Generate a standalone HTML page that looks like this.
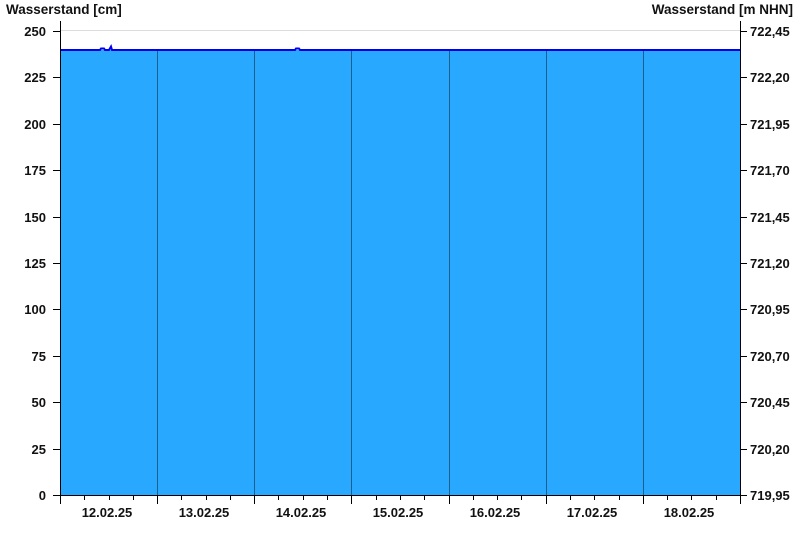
<!DOCTYPE html>
<html><head><meta charset="utf-8"><style>
html,body{margin:0;padding:0;background:#fff;width:800px;height:550px;overflow:hidden}
svg text{font-family:"Liberation Sans",Arial,sans-serif;font-weight:bold;font-size:13px;fill:#111}
svg text.t{font-size:13.5px}
</style></head><body>
<svg width="800" height="550" viewBox="0 0 800 550" xmlns="http://www.w3.org/2000/svg">
<text class="t" x="6" y="14">Wasserstand [cm]</text>
<text class="t" x="793" y="14" text-anchor="end">Wasserstand [m NHN]</text>
<line x1="60" y1="30.5" x2="740" y2="30.5" stroke="#dcdcdc" stroke-width="1"/>
<rect x="60" y="50" width="680" height="445" fill="#29a8ff"/>
<g stroke="#1d5f8c" stroke-width="1">
<line x1="157.5" y1="50" x2="157.5" y2="495"/>
<line x1="254.5" y1="50" x2="254.5" y2="495"/>
<line x1="351.5" y1="50" x2="351.5" y2="495"/>
<line x1="449.5" y1="50" x2="449.5" y2="495"/>
<line x1="546.5" y1="50" x2="546.5" y2="495"/>
<line x1="643.5" y1="50" x2="643.5" y2="495"/>
</g>
<polyline points="60,50 100,50 101,48.5 104,48.5 105,50 109,50 111,46.5 112,50 295,50 296,48.5 299,48.5 300,50 740,50" fill="none" stroke="#0000ee" stroke-width="2"/>
<g stroke="#000" stroke-width="1">
<line x1="60.5" y1="21" x2="60.5" y2="495"/>
<line x1="740.5" y1="21" x2="740.5" y2="495"/>
<line x1="53" y1="495.5" x2="747" y2="495.5"/>
</g>
<g stroke="#000" stroke-width="1">
<line x1="53" y1="31.5" x2="60" y2="31.5"/><line x1="53" y1="77.5" x2="60" y2="77.5"/>
<line x1="53" y1="124.5" x2="60" y2="124.5"/><line x1="53" y1="170.5" x2="60" y2="170.5"/>
<line x1="53" y1="217.5" x2="60" y2="217.5"/><line x1="53" y1="263.5" x2="60" y2="263.5"/>
<line x1="53" y1="309.5" x2="60" y2="309.5"/><line x1="53" y1="356.5" x2="60" y2="356.5"/>
<line x1="53" y1="402.5" x2="60" y2="402.5"/><line x1="53" y1="449.5" x2="60" y2="449.5"/>
<line x1="741" y1="31.5" x2="747" y2="31.5"/><line x1="741" y1="77.5" x2="747" y2="77.5"/>
<line x1="741" y1="124.5" x2="747" y2="124.5"/><line x1="741" y1="170.5" x2="747" y2="170.5"/>
<line x1="741" y1="217.5" x2="747" y2="217.5"/><line x1="741" y1="263.5" x2="747" y2="263.5"/>
<line x1="741" y1="309.5" x2="747" y2="309.5"/><line x1="741" y1="356.5" x2="747" y2="356.5"/>
<line x1="741" y1="402.5" x2="747" y2="402.5"/><line x1="741" y1="449.5" x2="747" y2="449.5"/>
</g>
<g stroke="#000" stroke-width="1">
<line x1="60.5" y1="495" x2="60.5" y2="504"/><line x1="84.5" y1="495" x2="84.5" y2="500"/><line x1="109.5" y1="495" x2="109.5" y2="500"/><line x1="133.5" y1="495" x2="133.5" y2="500"/>
<line x1="157.5" y1="495" x2="157.5" y2="504"/><line x1="181.5" y1="495" x2="181.5" y2="500"/><line x1="206.5" y1="495" x2="206.5" y2="500"/><line x1="230.5" y1="495" x2="230.5" y2="500"/>
<line x1="254.5" y1="495" x2="254.5" y2="504"/><line x1="278.5" y1="495" x2="278.5" y2="500"/><line x1="303.5" y1="495" x2="303.5" y2="500"/><line x1="327.5" y1="495" x2="327.5" y2="500"/>
<line x1="351.5" y1="495" x2="351.5" y2="504"/><line x1="376.5" y1="495" x2="376.5" y2="500"/><line x1="400.5" y1="495" x2="400.5" y2="500"/><line x1="424.5" y1="495" x2="424.5" y2="500"/>
<line x1="449.5" y1="495" x2="449.5" y2="504"/><line x1="473.5" y1="495" x2="473.5" y2="500"/><line x1="497.5" y1="495" x2="497.5" y2="500"/><line x1="521.5" y1="495" x2="521.5" y2="500"/>
<line x1="546.5" y1="495" x2="546.5" y2="504"/><line x1="570.5" y1="495" x2="570.5" y2="500"/><line x1="594.5" y1="495" x2="594.5" y2="500"/><line x1="619.5" y1="495" x2="619.5" y2="500"/>
<line x1="643.5" y1="495" x2="643.5" y2="504"/><line x1="667.5" y1="495" x2="667.5" y2="500"/><line x1="691.5" y1="495" x2="691.5" y2="500"/><line x1="716.5" y1="495" x2="716.5" y2="500"/>
<line x1="740.5" y1="495" x2="740.5" y2="504"/>
</g>
<g text-anchor="end">
<text x="46" y="36">250</text><text x="46" y="82">225</text><text x="46" y="129">200</text>
<text x="46" y="175">175</text><text x="46" y="222">150</text><text x="46" y="268">125</text>
<text x="46" y="314">100</text><text x="46" y="361">75</text><text x="46" y="407">50</text>
<text x="46" y="454">25</text><text x="46" y="500">0</text>
</g>
<g>
<text x="750" y="36">722,45</text><text x="750" y="82">722,20</text><text x="750" y="129">721,95</text>
<text x="750" y="175">721,70</text><text x="750" y="222">721,45</text><text x="750" y="268">721,20</text>
<text x="750" y="314">720,95</text><text x="750" y="361">720,70</text><text x="750" y="407">720,45</text>
<text x="750" y="454">720,20</text><text x="750" y="500">719,95</text>
</g>
<g text-anchor="middle">
<text x="107" y="517">12.02.25</text><text x="204" y="517">13.02.25</text><text x="301" y="517">14.02.25</text>
<text x="398" y="517">15.02.25</text><text x="495" y="517">16.02.25</text><text x="592" y="517">17.02.25</text>
<text x="689" y="517">18.02.25</text>
</g>
</svg>
</body></html>
